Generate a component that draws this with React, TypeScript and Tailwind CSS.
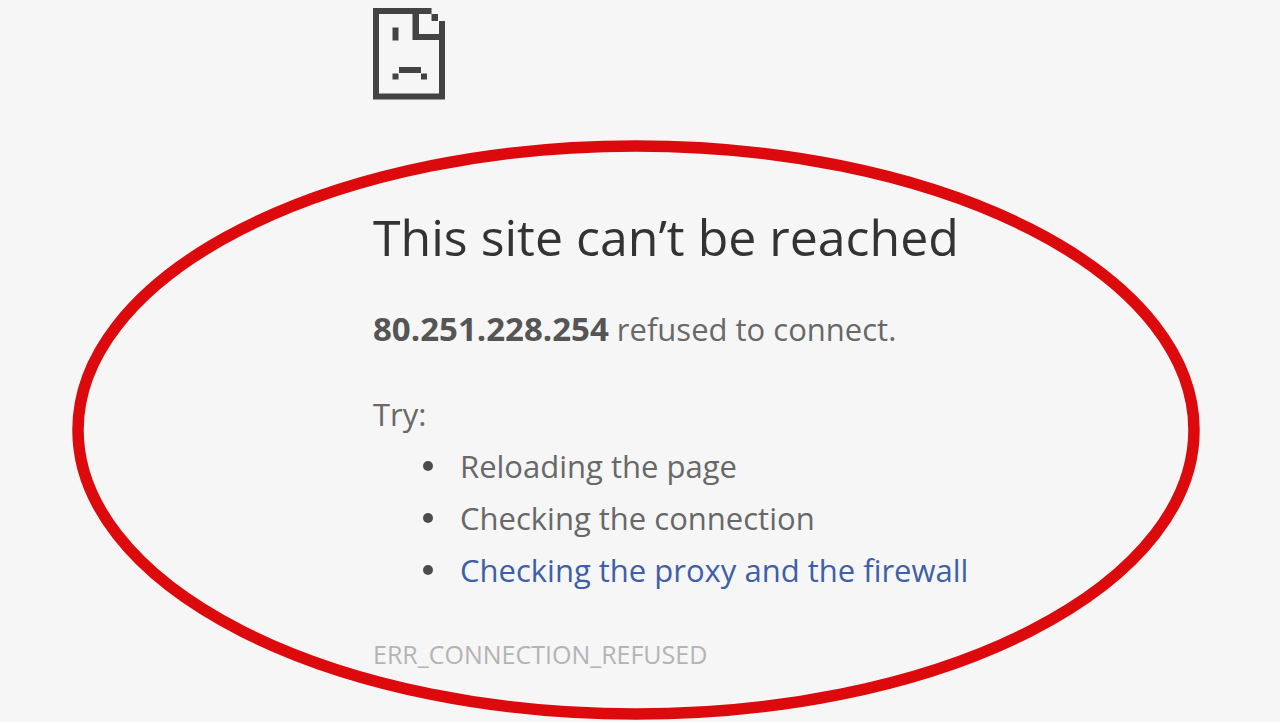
function SadPageIcon() {
  return (
    <svg
      width="74"
      height="93"
      viewBox="0 0 74 93"
      fill="#434343"
      role="img"
      aria-label="Page error"
      className="block"
    >
      <path d="M0 0H58.5V6H46V26H66V13H72V91.500H0ZM6 6V85.500H66V32H39.500V6Z" fillRule="evenodd" />
      <path d="M58.500 6H65V13H58.500Z" />
      <path d="M19.500 19.500H25.500V32.500H19.500Z" />
      <path d="M26 59H48V65H26Z" />
      <path d="M19.500 65.500H25.500V71.500H19.500ZM48 65.500H54V71.500H48Z" />
    </svg>
  );
}

function HighlightRing() {
  return (
    <svg
      viewBox="0 0 1128 580"
      className="pointer-events-none absolute top-[140px] left-[72px] w-[1128px]"
      fill="none"
      aria-hidden="true"
    >
      <ellipse cx="564" cy="290" rx="558" ry="284" stroke="#dc0a0d" strokeWidth="11.5" />
    </svg>
  );
}

const itemClass =
  "flex items-center gap-[27px] before:size-[10px] before:rounded-full before:bg-[#4c4c4c] before:content-['']";

export default function App() {
  return (
    <div className="relative min-h-screen overflow-hidden bg-[#f6f6f6] font-['Open_Sans','Noto_Sans',sans-serif] text-[#686868]">
      <main className="pt-2 pl-[373px] text-[31px] leading-[52px]">
        <SadPageIcon />
        <h1 className="mt-[104px] text-[50px] leading-[64px] text-[#333333]">
          This site can’t be reached
        </h1>
        <p className="mt-[34px]">
          <strong className="text-[33px] font-bold text-[#555555]">80.251.228.254</strong> refused to
          connect.
        </p>
        <p className="mt-[33px]">Try:</p>
        <ul className="pl-[50px]">
          <li className={itemClass}>Reloading the page</li>
          <li className={itemClass}>Checking the connection</li>
          <li className={itemClass}>
            <a href="#proxy" className="text-[#3f5fa8]">
              Checking the proxy and the firewall
            </a>
          </li>
        </ul>
        <p className="mt-8 text-[25px] text-[#b4b4b4]">ERR_CONNECTION_REFUSED</p>
      </main>
      <HighlightRing />
    </div>
  );
}
